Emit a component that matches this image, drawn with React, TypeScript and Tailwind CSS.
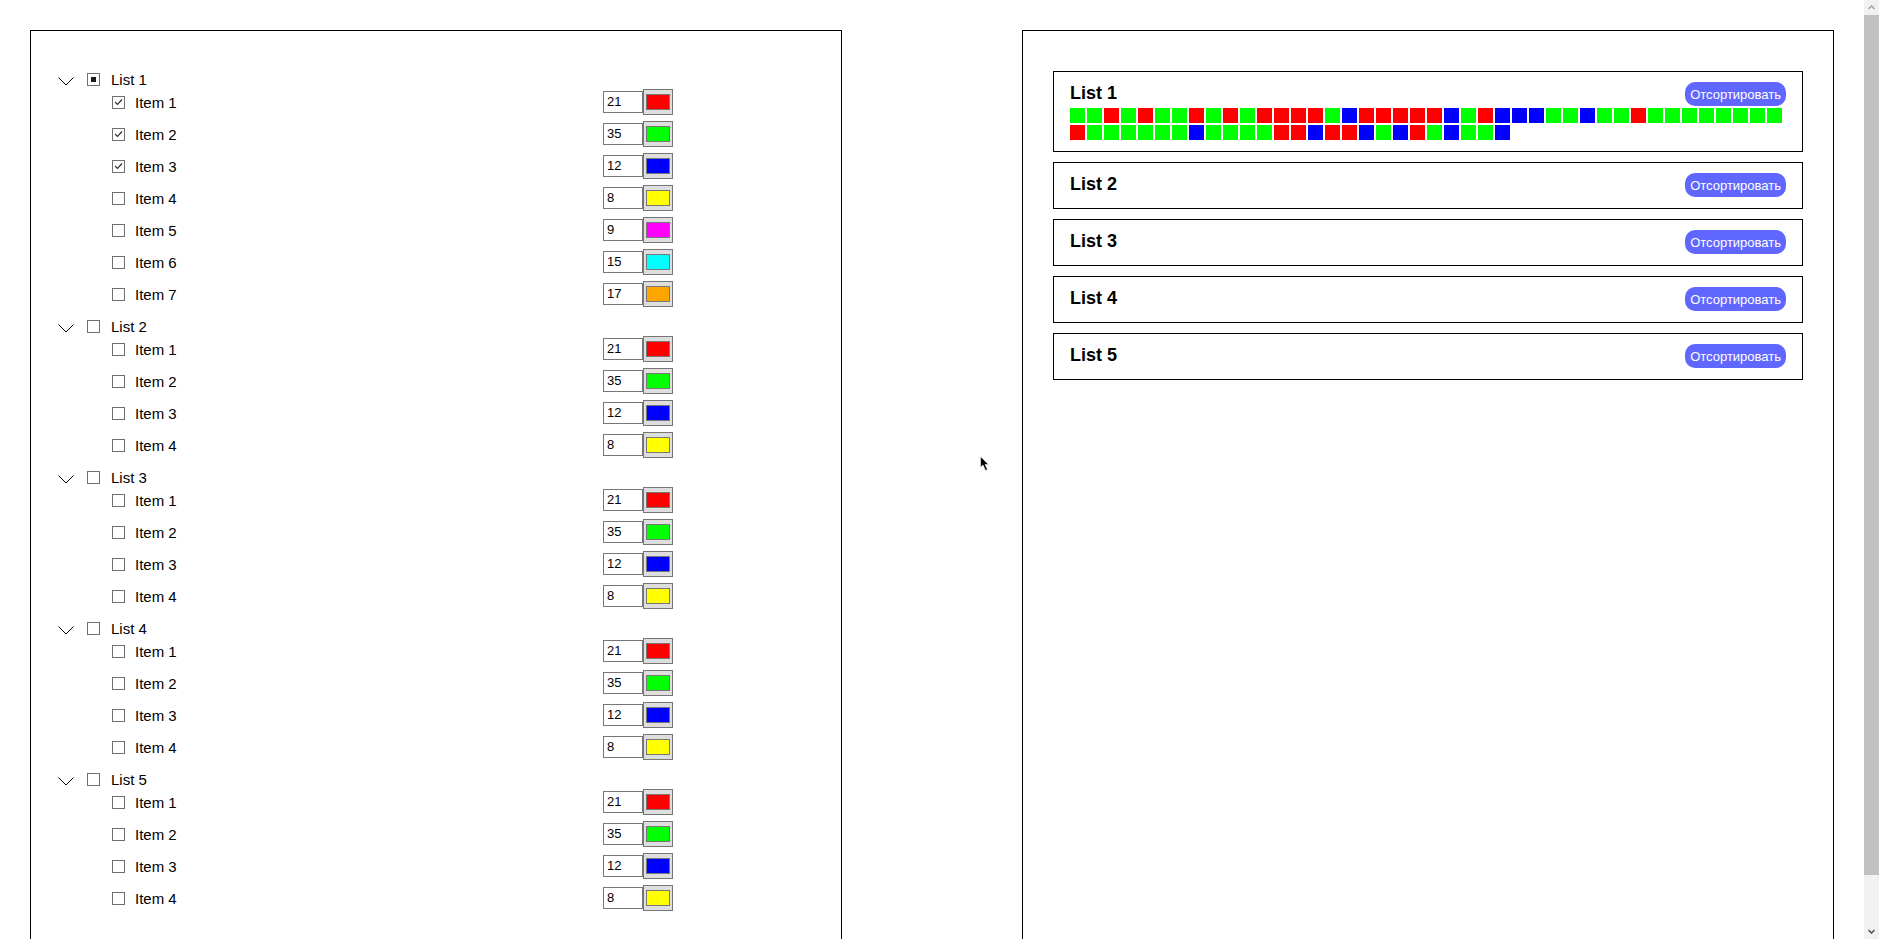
import React from 'react'

type Item = { name: string; value: number; color: string; checked: boolean }
type List = { name: string; state: 'on' | 'off' | 'mixed'; items: Item[] }

const base = [
  { value: 21, color: '#ff0000' },
  { value: 35, color: '#00ff00' },
  { value: 12, color: '#0000ff' },
  { value: 8, color: '#ffff00' },
]

const lists: List[] = [
  {
    name: 'List 1',
    state: 'mixed',
    items: [
      ...base,
      { value: 9, color: '#ff00ff' },
      { value: 15, color: '#00ffff' },
      { value: 17, color: '#ffa500' },
    ].map((it, i) => ({ ...it, name: `Item ${i + 1}`, checked: i < 3 })),
  },
  ...[2, 3, 4, 5].map((n) => ({
    name: `List ${n}`,
    state: 'off' as const,
    items: base.map((it, i) => ({ ...it, name: `Item ${i + 1}`, checked: false })),
  })),
]

// shuffled squares shown for List 1 (21 red, 35 green, 12 blue)
const squares = 'GGRGRGGRGRGRRRRGBRRRRRBGRBBBGGBGGRGGGGGGGG' + 'RGGGGGGBGGGGRRBRRBGBRGBGGB'
const sqColor: Record<string, string> = { R: '#ff0000', G: '#00ff00', B: '#0000ff' }

function Box({ state }: { state: 'on' | 'off' | 'mixed' }) {
  return (
    <span className="w-[13px] h-[13px] border border-[#707070] bg-white flex items-center justify-center shrink-0">
      {state === 'mixed' && <span className="w-[5px] h-[5px] bg-[#1a1a1a]" />}
      {state === 'on' && (
        <svg width="9" height="8" viewBox="0 0 9 8">
          <path d="M1 4 L3.5 6.5 L8 1.5" stroke="#333" strokeWidth="1.2" fill="none" />
        </svg>
      )}
    </span>
  )
}

function Chevron() {
  return (
    <svg width="16" height="9" viewBox="0 0 16 9" className="mt-1 shrink-0">
      <path d="M0.5 0.5 L8 8 L15.5 0.5" stroke="#000" strokeWidth="1" fill="none" />
    </svg>
  )
}

function TreeList({ list }: { list: List }) {
  return (
    <div className="mb-[9px]">
      <div className="h-[14px] flex items-center pl-[27px]">
        <Chevron />
        <span className="ml-[13px]">
          <Box state={list.state} />
        </span>
        <span className="ml-[11px] text-[15px] leading-none text-black">{list.name}</span>
      </div>
      {list.items.map((it) => (
        <div key={it.name} className="h-8 flex items-center pl-[81px]">
          <Box state={it.checked ? 'on' : 'off'} />
          <span className="ml-[10px] w-[468px] text-[15px] leading-none text-black">{it.name}</span>
          <div className="w-[40px] h-[22px] border border-[#767676] bg-white text-[13px] pl-[3px] flex items-center text-black">
            {it.value}
          </div>
          <div className="w-[30px] h-[26px] border border-[#767676] bg-[#dedede] flex items-center justify-center">
            <div className="w-[24px] h-[16px] border border-[#777]" style={{ backgroundColor: it.color }} />
          </div>
        </div>
      ))}
    </div>
  )
}

function Card({ name, showSquares }: { name: string; showSquares: boolean }) {
  return (
    <div className="border border-black px-4 pt-[10px] pb-[11px]">
      <div className="h-[24px] flex items-start justify-between">
        <h2 className="text-[18px] font-bold leading-[22px] text-black">{name}</h2>
        <button className="h-[24px] px-[5px] rounded-[10px] bg-[#5f67ff] text-white text-[13px] leading-none">
          Отсортировать
        </button>
      </div>
      {showSquares && (
        <div className="mt-[2px] flex flex-wrap gap-[2px]">
          {squares.split('').map((c, i) => (
            <span key={i} className="w-[15px] h-[15px]" style={{ backgroundColor: sqColor[c] }} />
          ))}
        </div>
      )}
    </div>
  )
}

function FakeScrollbar() {
  return (
    <div className="fixed right-0 top-0 w-[15px] h-screen bg-[#f1f1f1] flex flex-col">
      <div className="h-[15px] flex items-center justify-center">
        <svg width="7" height="5" viewBox="0 0 7 5">
          <path d="M0.5 4 L3.5 1 L6.5 4" stroke="#a3a3a3" strokeWidth="1.5" fill="none" />
        </svg>
      </div>
      <div className="h-[860px] bg-[#c1c1c1]" />
      <div className="flex-1" />
      <div className="h-[15px] flex items-center justify-center">
        <svg width="7" height="5" viewBox="0 0 7 5">
          <path d="M0.5 1 L3.5 4 L6.5 1" stroke="#505050" strokeWidth="1.5" fill="none" />
        </svg>
      </div>
    </div>
  )
}

export default function App() {
  return (
    <main className="relative min-h-screen bg-white flex gap-[180px] p-[30px] font-['Liberation_Sans',Arial,sans-serif]">
      <section className="w-[812px] shrink-0 border border-black pt-[41px] pb-[39px]">
        {lists.map((l) => (
          <TreeList key={l.name} list={l} />
        ))}
      </section>
      <section className="w-[812px] shrink-0 border border-black pt-[40px] px-[30px]">
        <div className="flex flex-col gap-[10px]">
          {lists.map((l, i) => (
            <Card key={l.name} name={l.name} showSquares={i === 0} />
          ))}
        </div>
      </section>
      <svg width="10" height="16" viewBox="0 0 10 16" className="absolute left-[980px] top-[456px]">
        <path d="M0.5 0.5 L0.5 11.5 L3 9 L5.5 14.5 L7.5 13.5 L5 8.5 L8.5 8.5 Z" fill="#000" stroke="#fff" strokeWidth="0.6" />
      </svg>
      <FakeScrollbar />
    </main>
  )
}
